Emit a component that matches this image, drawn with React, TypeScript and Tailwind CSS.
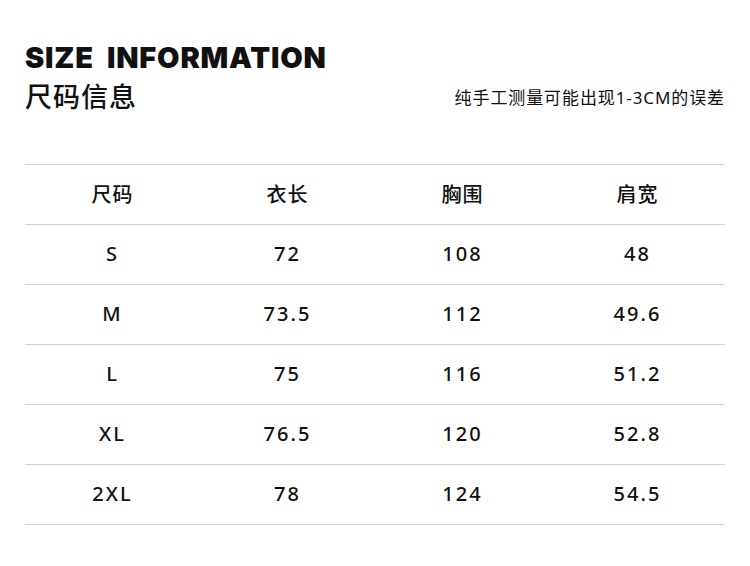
import React from "react";

const rows = [
  ["尺码", "衣长", "胸围", "肩宽"],
  ["S", "72", "108", "48"],
  ["M", "73.5", "112", "49.6"],
  ["L", "75", "116", "51.2"],
  ["XL", "76.5", "120", "52.8"],
  ["2XL", "78", "124", "54.5"],
];

export default function App() {
  return (
    <div className="w-[750px] h-[566px] bg-white px-[25px] pt-[40px] text-[#111]" style={{ fontFamily: '"Noto Sans", "Noto Sans CJK SC", sans-serif' }}>
      <div className="flex items-end justify-between">
        <div>
          <div className="text-[29px] leading-[36px] font-black tracking-[0.8px] whitespace-pre" style={{ fontFamily: 'Inter, "Noto Sans", sans-serif' }}>
            SIZE  INFORMATION
          </div>
          <div className="text-[27px] leading-[36px] font-medium tracking-[1px] mt-[2px]" style={{ fontFamily: '"Noto Sans CJK SC", sans-serif' }}>
            尺码信息
          </div>
        </div>
        <div className="text-[17px] leading-[20px] tracking-[0.9px] mb-[6px]" style={{ fontFamily: '"Noto Sans", "Noto Sans CJK SC", sans-serif' }}>
          纯手工测量可能出现1-3CM的误差
        </div>
      </div>
      <div className="mt-[50px] border-t border-[#d4d4d4]">
        {rows.map((r, i) => (
          <div key={i} className="grid grid-cols-4 h-[60px] border-b border-[#d4d4d4] items-center">
            {r.map((c, j) => (
              <div key={j} className={"text-center text-[20px] font-medium " + (i === 0 ? "tracking-[1px]" : "tracking-[2px] pb-[2px]")}>
                {c}
              </div>
            ))}
          </div>
        ))}
      </div>
    </div>
  );
}
